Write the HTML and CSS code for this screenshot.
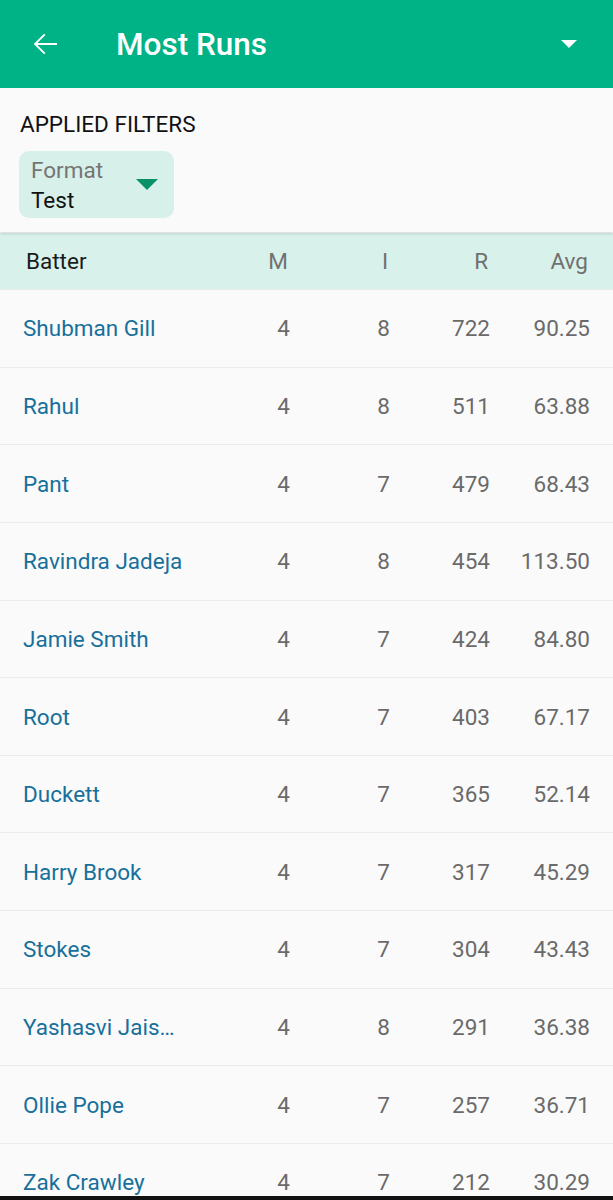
FILE: index.html
```html
<!DOCTYPE html>
<html>
<head>
<meta charset="utf-8">
<link rel="stylesheet" href="styles.css">
</head>
<body>
<header class="appbar">
  <svg class="back" width="36" height="36" viewBox="0 0 24 24"><path d="M20 11.4H6.9l5.4-5.4-.9-.9L4.5 12l6.9 6.9.9-.9-5.4-5.4H20z" fill="#fff"/></svg>
  <h1 class="title">Most Runs</h1>
  <span class="menu-caret"></span>
</header>
<section class="filters">
  <div class="filters-label">APPLIED FILTERS</div>
  <div class="chip">
    <div class="chip-text">
      <div class="chip-key">Format</div>
      <div class="chip-val">Test</div>
    </div>
    <span class="chip-caret"></span>
  </div>
</section>
<div class="table">
  <div class="row head">
    <div class="name">Batter</div><div class="num">M</div><div class="num">I</div><div class="num">R</div><div class="num">Avg</div>
  </div>
  <div class="row"><div class="name">Shubman Gill</div><div class="num">4</div><div class="num">8</div><div class="num">722</div><div class="num">90.25</div></div>
  <div class="row"><div class="name">Rahul</div><div class="num">4</div><div class="num">8</div><div class="num">511</div><div class="num">63.88</div></div>
  <div class="row"><div class="name">Pant</div><div class="num">4</div><div class="num">7</div><div class="num">479</div><div class="num">68.43</div></div>
  <div class="row"><div class="name">Ravindra Jadeja</div><div class="num">4</div><div class="num">8</div><div class="num">454</div><div class="num">113.50</div></div>
  <div class="row"><div class="name">Jamie Smith</div><div class="num">4</div><div class="num">7</div><div class="num">424</div><div class="num">84.80</div></div>
  <div class="row"><div class="name">Root</div><div class="num">4</div><div class="num">7</div><div class="num">403</div><div class="num">67.17</div></div>
  <div class="row"><div class="name">Duckett</div><div class="num">4</div><div class="num">7</div><div class="num">365</div><div class="num">52.14</div></div>
  <div class="row"><div class="name">Harry Brook</div><div class="num">4</div><div class="num">7</div><div class="num">317</div><div class="num">45.29</div></div>
  <div class="row"><div class="name">Stokes</div><div class="num">4</div><div class="num">7</div><div class="num">304</div><div class="num">43.43</div></div>
  <div class="row"><div class="name">Yashasvi Jais…</div><div class="num">4</div><div class="num">8</div><div class="num">291</div><div class="num">36.38</div></div>
  <div class="row"><div class="name">Ollie Pope</div><div class="num">4</div><div class="num">7</div><div class="num">257</div><div class="num">36.71</div></div>
  <div class="row"><div class="name">Zak Crawley</div><div class="num">4</div><div class="num">7</div><div class="num">212</div><div class="num">30.29</div></div>
</div>
<div class="navbar"></div>
</body>
</html>
```

FILE: styles.css
```css
* { box-sizing: border-box; }
html, body { margin: 0; padding: 0; }
body {
  background: #fafafa;
  font-family: Roboto, "Noto Sans", sans-serif;
  width: 613px;
  height: 1200px;
  overflow: hidden;
  position: relative;
}
.appbar {
  height: 88px;
  background: #00b386;
  display: flex;
  align-items: center;
  padding: 0 36px 0 27px;
}
.back { flex: none; }
.title {
  margin: 0 0 0 53px;
  font-weight: 500;
  font-size: 31.5px;
  color: #fff;
  flex: 1;
}
.menu-caret {
  width: 0; height: 0;
  border-left: 8px solid transparent;
  border-right: 8px solid transparent;
  border-top: 8px solid #fff;
}
.filters {
  padding: 22px 19px 14px;
  background: #fafafa;
  position: relative;
  z-index: 1;
  box-shadow: 0 2px 3px rgba(0,0,0,0.12);
}
.filters-label {
  font-size: 22.5px;
  color: #111;
  padding-left: 1px;
  line-height: 28px;
}
.chip {
  margin-top: 13px;
  width: 155px;
  height: 67px;
  background: #d7f0e9;
  border-radius: 10px;
  display: flex;
  align-items: center;
  padding: 0 16px 0 12px;
}
.chip-text { flex: 1; font-size: 22.5px; line-height: 30px; }
.chip-key { color: #757575; }
.chip-val { color: #111; }
.chip-caret {
  width: 0; height: 0;
  border-left: 11px solid transparent;
  border-right: 11px solid transparent;
  border-top: 11px solid #079169;
}
.table { margin-top: 1px; }
.row {
  display: grid;
  grid-template-columns: 1fr 100px 100px 100px 100px;
  padding: 0 23px 0 23px;
  height: 77.65px;
  align-items: center;
  border-top: 1px solid #ececec;
  font-size: 22.5px;
}
.row.head {
  height: 56px;
  background: #d8f1ea;
  border-top: none;
}
.row.head .name { color: #1b1b1b; padding-left: 3px; }
.row.head .num { color: #707070; padding-right: 2px; }
.name {
  color: #17709b;
  white-space: nowrap;
  overflow: hidden;
}
.num { text-align: right; color: #6a6a6a; }
.navbar {
  position: absolute;
  left: 0; right: 0; bottom: 0;
  height: 4px;
  background: #111;
}
```
